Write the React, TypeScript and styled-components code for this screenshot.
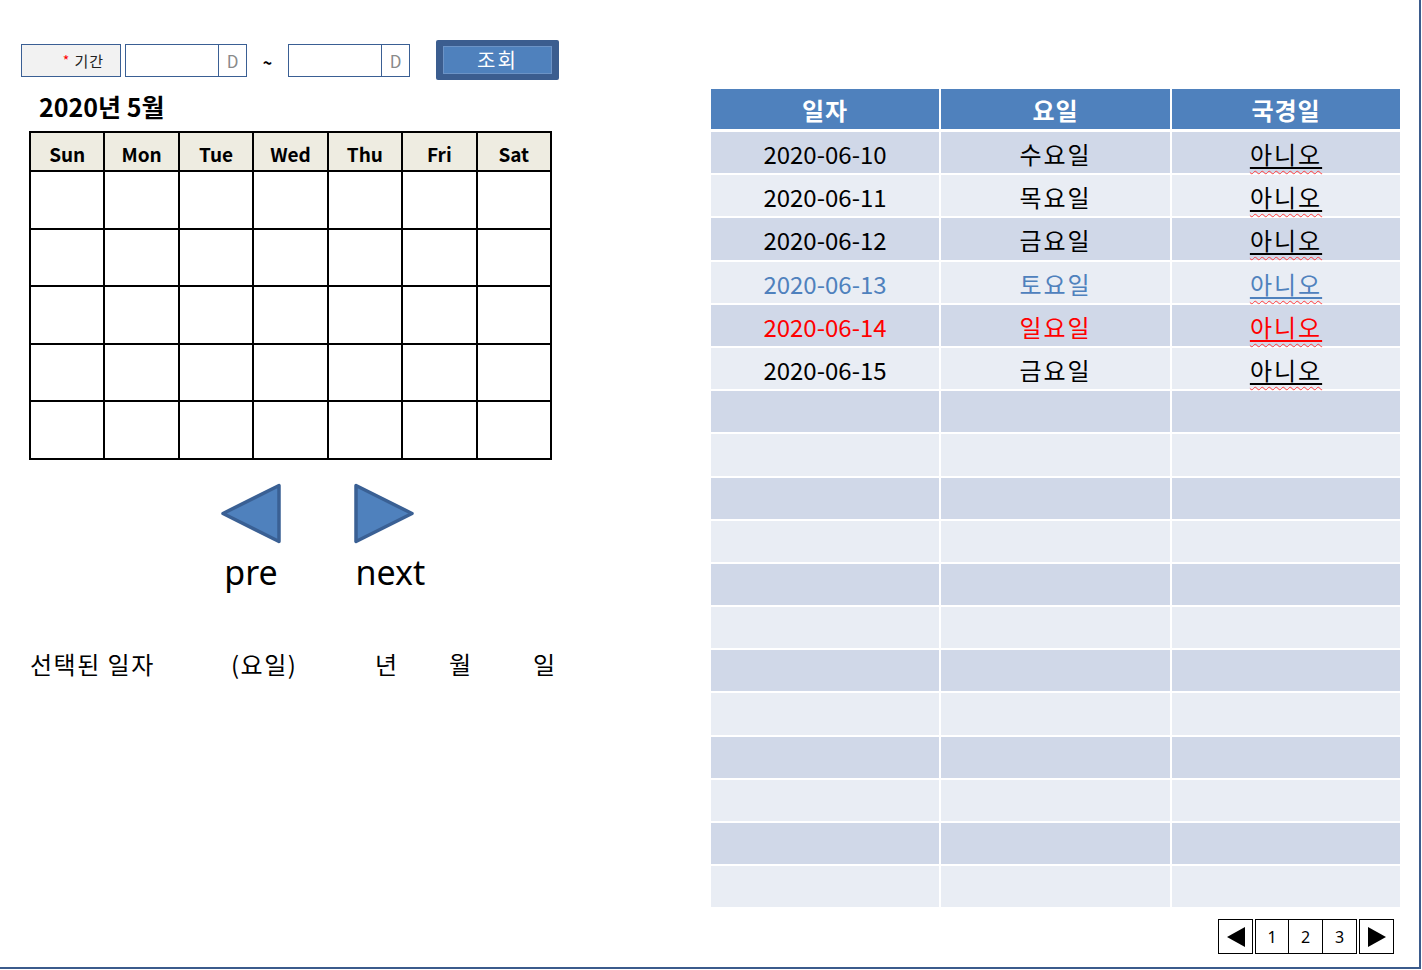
import React from "react";
import styled, { createGlobalStyle } from "styled-components";

const GlobalStyle = createGlobalStyle`
  body {
    margin: 0;
    background: #ffffff;
    font-family: "Noto Sans CJK KR", "Noto Sans", sans-serif;
    color: #000;
  }
`;

const Page = styled.div`
  width: 1419px;
  height: 967px;
  border-right: 2px solid #3b5b8c;
  border-bottom: 2px solid #3b5b8c;
  display: flex;
  background: #fff;
`;

const LeftPane = styled.div`
  width: 690px;
  padding: 40px 0 0 21px;
  display: flex;
  flex-direction: column;
`;

const FilterBar = styled.div`
  display: flex;
  align-items: center;
  height: 40px;
`;

const LabelBox = styled.div`
  display: flex;
  align-items: center;
  justify-content: flex-end;
  padding-right: 16px;
  box-sizing: border-box;
  width: 100px;
  height: 33px;
  border: 1px solid #3a5f94;
  background: #f2f2f2;
  font-size: 15px;
  letter-spacing: 1px;
  color: #222;
`;

const Star = styled.span`
  color: #ff0000;
  margin-right: 4px;
  font-size: 14px;
`;

const DateInput = styled.div<{ $gap: number }>`
  margin-left: ${(p) => p.$gap}px;
  width: 122px;
  height: 33px;
  border: 1px solid #3a5f94;
  box-sizing: border-box;
  display: flex;
`;

const InputField = styled.div`
  flex: 1;
`;

const DButton = styled.div`
  width: 27px;
  border-left: 1px solid #3a5f94;
  display: flex;
  align-items: center;
  justify-content: center;
  color: #8a8a8a;
  font-size: 17px;
`;

const Tilde = styled.span`
  width: 41px;
  text-align: center;
  font-size: 16px;
  font-weight: bold;
  padding-top: 4px;
`;

const SearchButton = styled.button`
  margin-left: 26px;
  width: 123px;
  height: 40px;
  border: none;
  border-radius: 2px;
  background: #3b5d8f;
  padding: 6px 7px;
  box-sizing: border-box;
  cursor: pointer;
`;

const SearchInner = styled.div`
  height: 100%;
  background: #4f81bd;
  border: 1px solid #6c93c6;
  box-sizing: border-box;
  color: #fff;
  font-family: "Noto Sans CJK KR", sans-serif;
  font-size: 20px;
  letter-spacing: 2px;
  display: flex;
  align-items: center;
  justify-content: center;
  line-height: 1;
`;

const MonthTitle = styled.h2`
  margin: 13px 0 0 18px;
  font-size: 25px;
  font-weight: 700;
  line-height: 26px;
`;

const Calendar = styled.table`
  margin: 12px 0 0 8px;
  width: 523px;
  border-collapse: collapse;
  table-layout: fixed;
`;

const DayHead = styled.th`
  height: 34px;
  border: 2px solid #000;
  background: #eeece1;
  font-size: 19px;
  font-weight: 700;
  padding: 3px 0 0;
`;

const DayCell = styled.td`
  height: 55.6px;
  border: 2px solid #000;
  padding: 0;
`;

const NavRow = styled.div`
  display: flex;
  margin: 23px 0 0 199px;
  gap: 71px;
`;

const NavItem = styled.div`
  display: flex;
  flex-direction: column;
  align-items: center;
  width: 62px;
`;

const NavLabel = styled.span<{ $shift: number }>`
  font-family: "Noto Sans", sans-serif;
  font-size: 34px;
  line-height: 40px;
  margin-top: 8px;
  margin-left: ${(p) => p.$shift}px;
  white-space: nowrap;
`;

const SelectedRow = styled.div`
  margin: 57px 0 0 9px;
  display: grid;
  grid-template-columns: 201px 144px 74px 84px auto;
  font-size: 24px;
  letter-spacing: 1.5px;
  line-height: 30px;
`;

const RightPane = styled.div`
  padding: 89px 0 0 0;
  display: flex;
  flex-direction: column;
`;

const Grid = styled.div`
  width: 689px;
  display: grid;
  grid-template-columns: 228px 229px 228px;
  column-gap: 2px;
  row-gap: 2px;
  background: #fff;
`;

const HeadCell = styled.div`
  height: 40px;
  margin-bottom: 1px;
  background: #4f81bd;
  color: #fff;
  font-size: 24px;
  font-weight: 700;
  letter-spacing: 1px;
  display: flex;
  align-items: center;
  justify-content: center;
`;

const BodyCell = styled.div<{ $odd: boolean; $tone: string; $kr?: boolean }>`
  height: 41.2px;
  background: ${(p) => (p.$odd ? "#d0d8e8" : "#e9edf4")};
  color: ${(p) => p.$tone};
  font-size: 24px;
  letter-spacing: ${(p) => (p.$kr ? "2px" : "0")};
  display: flex;
  align-items: center;
  justify-content: center;
  padding-top: 2px;
  box-sizing: border-box;
`;

const Spell = styled.span`
  text-decoration: underline wavy #ff3b3b;
  text-decoration-thickness: 1px;
  text-underline-offset: 6px;
`;

const Under = styled.span`
  text-decoration: underline solid currentColor;
  text-decoration-thickness: 1.5px;
  text-underline-offset: 3px;
`;

const Pager = styled.div`
  display: flex;
  align-self: flex-end;
  margin: 12px 6px 0 0;
  gap: 2px;
`;

const PagerGroup = styled.div`
  display: flex;
`;

const PageBox = styled.div<{ $arrow?: boolean }>`
  width: ${(p) => (p.$arrow ? 35 : 34)}px;
  height: 35px;
  border: 1px solid #000;
  box-sizing: border-box;
  display: flex;
  align-items: center;
  justify-content: center;
  font-family: "Noto Sans", sans-serif;
  font-size: 16px;
  & + & {
    border-left: none;
  }
`;

const days = ["Sun", "Mon", "Tue", "Wed", "Thu", "Fri", "Sat"];

const rows = [
  { date: "2020-06-10", day: "수요일", tone: "#000" },
  { date: "2020-06-11", day: "목요일", tone: "#000" },
  { date: "2020-06-12", day: "금요일", tone: "#000" },
  { date: "2020-06-13", day: "토요일", tone: "#4f81bd" },
  { date: "2020-06-14", day: "일요일", tone: "#ff0000" },
  { date: "2020-06-15", day: "금요일", tone: "#000" },
];

const Triangle = ({ dir }: { dir: "left" | "right" }) => (
  <svg width="62" height="61" viewBox="0 0 62 61">
    <polygon
      points={dir === "left" ? "3,30.5 59,2.5 59,58.5" : "3,2.5 59,30.5 3,58.5"}
      fill="#4f81bd"
      stroke="#3a6094"
      strokeWidth="3.5"
      strokeLinejoin="round"
    />
  </svg>
);

const SmallArrow = ({ dir }: { dir: "left" | "right" }) => (
  <svg width="20" height="22" viewBox="0 0 20 22">
    <polygon points={dir === "left" ? "1,11 19,1 19,21" : "1,1 19,11 1,21"} fill="#000" />
  </svg>
);

export default function App() {
  const tableRows = Array.from({ length: 18 }, (_, i) => rows[i] ?? null);
  return (
    <>
      <GlobalStyle />
      <Page>
        <LeftPane>
          <FilterBar>
            <LabelBox>
              <Star>*</Star>기간
            </LabelBox>
            <DateInput $gap={4}>
              <InputField />
              <DButton>D</DButton>
            </DateInput>
            <Tilde>~</Tilde>
            <DateInput $gap={0}>
              <InputField />
              <DButton>D</DButton>
            </DateInput>
            <SearchButton>
              <SearchInner>조회</SearchInner>
            </SearchButton>
          </FilterBar>

          <MonthTitle>2020년 5월</MonthTitle>

          <Calendar>
            <thead>
              <tr>
                {days.map((d) => (
                  <DayHead key={d}>{d}</DayHead>
                ))}
              </tr>
            </thead>
            <tbody>
              {Array.from({ length: 5 }, (_, r) => (
                <tr key={r}>
                  {days.map((d) => (
                    <DayCell key={d} />
                  ))}
                </tr>
              ))}
            </tbody>
          </Calendar>

          <NavRow>
            <NavItem>
              <Triangle dir="left" />
              <NavLabel $shift={0}>pre</NavLabel>
            </NavItem>
            <NavItem>
              <Triangle dir="right" />
              <NavLabel $shift={13}>next</NavLabel>
            </NavItem>
          </NavRow>

          <SelectedRow>
            <span>선택된 일자</span>
            <span>(요일)</span>
            <span>년</span>
            <span>월</span>
            <span>일</span>
          </SelectedRow>
        </LeftPane>

        <RightPane>
          <Grid>
            <HeadCell>일자</HeadCell>
            <HeadCell>요일</HeadCell>
            <HeadCell>국경일</HeadCell>
            {tableRows.map((row, i) => (
              <React.Fragment key={i}>
                <BodyCell $odd={i % 2 === 0} $tone={row?.tone ?? "#000"}>
                  {row?.date}
                </BodyCell>
                <BodyCell $odd={i % 2 === 0} $tone={row?.tone ?? "#000"} $kr>
                  {row?.day}
                </BodyCell>
                <BodyCell $odd={i % 2 === 0} $tone={row?.tone ?? "#000"} $kr>
                  {row && (
                    <Spell>
                      <Under>아니오</Under>
                    </Spell>
                  )}
                </BodyCell>
              </React.Fragment>
            ))}
          </Grid>

          <Pager>
            <PageBox $arrow>
              <SmallArrow dir="left" />
            </PageBox>
            <PagerGroup>
              <PageBox>1</PageBox>
              <PageBox>2</PageBox>
              <PageBox>3</PageBox>
            </PagerGroup>
            <PageBox $arrow>
              <SmallArrow dir="right" />
            </PageBox>
          </Pager>
        </RightPane>
      </Page>
    </>
  );
}
